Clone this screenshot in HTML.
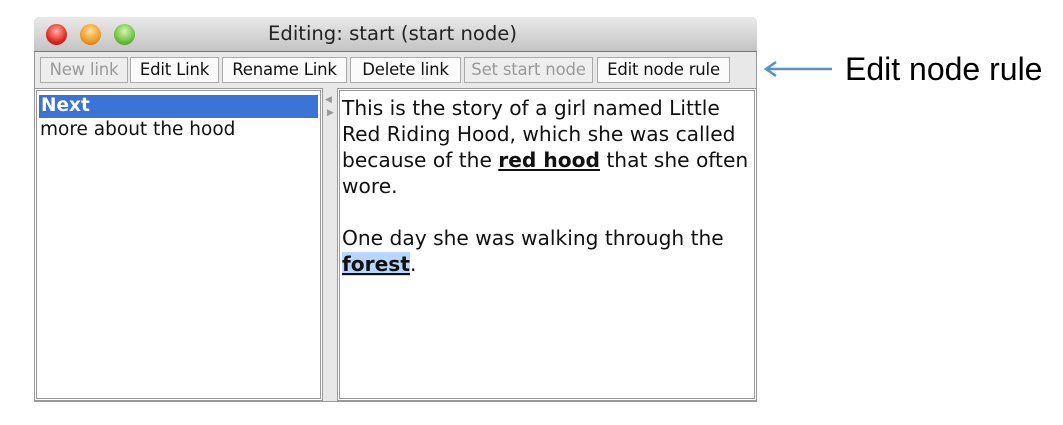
<!DOCTYPE html>
<html><head><style>
body{margin:0;width:1063px;height:425px;background:#fff;position:relative;overflow:hidden;font-family:"DejaVu Sans","Liberation Sans",sans-serif}
.a{position:absolute}
.win{left:34px;top:17px;width:723px;height:385px;background:#e8e8e8;border:1px solid #9a9a9a;border-radius:6px 6px 0 0;box-sizing:border-box}
.title{left:34px;top:17px;width:723px;height:35px;background:linear-gradient(#e9e9e9,#c4c4c4);border-radius:6px 6px 0 0;border-bottom:1px solid #777;box-sizing:border-box}
.dot{width:21px;height:21px;border-radius:50%;top:24px}
.btn{top:57px;height:26px;border:1px solid #aaa;background:#fbfbfb;box-sizing:border-box;font-size:16.5px;line-height:24px;text-align:center;color:#111;white-space:nowrap;letter-spacing:-0.2px}
.dis{color:#999;background:#eee}
.pane{background:#fff;border:3px double #999;box-sizing:border-box}
.t{left:342px;font-size:20.2px;white-space:nowrap;color:#111;line-height:24px}
</style></head><body>
<div class="a win"></div>
<div class="a title"></div>
<div class="a dot" style="left:46px;background:radial-gradient(circle at 50% 35%,#ffb0a8,#e0281e 60%,#a01010)"></div>
<div class="a dot" style="left:80px;background:radial-gradient(circle at 50% 35%,#ffe0a0,#f09a20 60%,#b86010)"></div>
<div class="a dot" style="left:114px;background:radial-gradient(circle at 50% 35%,#d8f5b0,#6cc040 60%,#3a8a20)"></div>
<div class="a" style="left:268px;top:22px;font-size:19.6px;color:#222">Editing: start (start node)</div>
<div class="a btn dis" style="left:40px;width:88px">New link</div>
<div class="a btn" style="left:130px;width:89px">Edit Link</div>
<div class="a btn" style="left:222px;width:125px">Rename Link</div>
<div class="a btn" style="left:350px;width:111px">Delete link</div>
<div class="a btn dis" style="left:464px;width:129px">Set start node</div>
<div class="a btn" style="left:597px;width:133px">Edit node rule</div>
<div class="a pane" style="left:34px;top:88px;width:289px;height:313px"></div>
<div class="a" style="left:39px;top:95px;width:279px;height:23px;background:#3a74d6"></div>
<div class="a" style="left:41px;top:95px;font-size:18.5px;color:#fff;font-weight:bold">Next</div>
<div class="a" style="left:40px;top:119px;font-size:18.5px;color:#111">more about the hood</div>
<div class="a" style="left:325px;top:95px;color:#999;font-size:9px">◀</div>
<div class="a" style="left:327px;top:108px;color:#999;font-size:9px">▶</div>
<div class="a pane" style="left:337px;top:88px;width:420px;height:313px"></div>
<div class="a t" style="top:96px">This is the story of a girl named Little</div>
<div class="a t" style="top:122px">Red Riding Hood, which she was called</div>
<div class="a t" style="top:148px">because of the <b style="text-decoration:underline">red hood</b> that she often</div>
<div class="a t" style="top:174px">wore.</div>
<div class="a t" style="top:226px">One day she was walking through the</div>
<div class="a t" style="top:252px"><b style="text-decoration:underline;background:#b8d6ff">forest</b>.</div>
<svg class="a" style="left:760px;top:58px" width="80" height="22"><line x1="8" y1="11" x2="72" y2="11" stroke="#5b8fc8" stroke-width="2.5"/><polyline points="16,4 6,11 16,18" fill="none" stroke="#5b8fc8" stroke-width="2.5"/></svg>
<div class="a" style="left:845px;top:51px;font-size:32px;font-family:'Liberation Sans',sans-serif;color:#000">Edit node rule</div>
</body></html>
